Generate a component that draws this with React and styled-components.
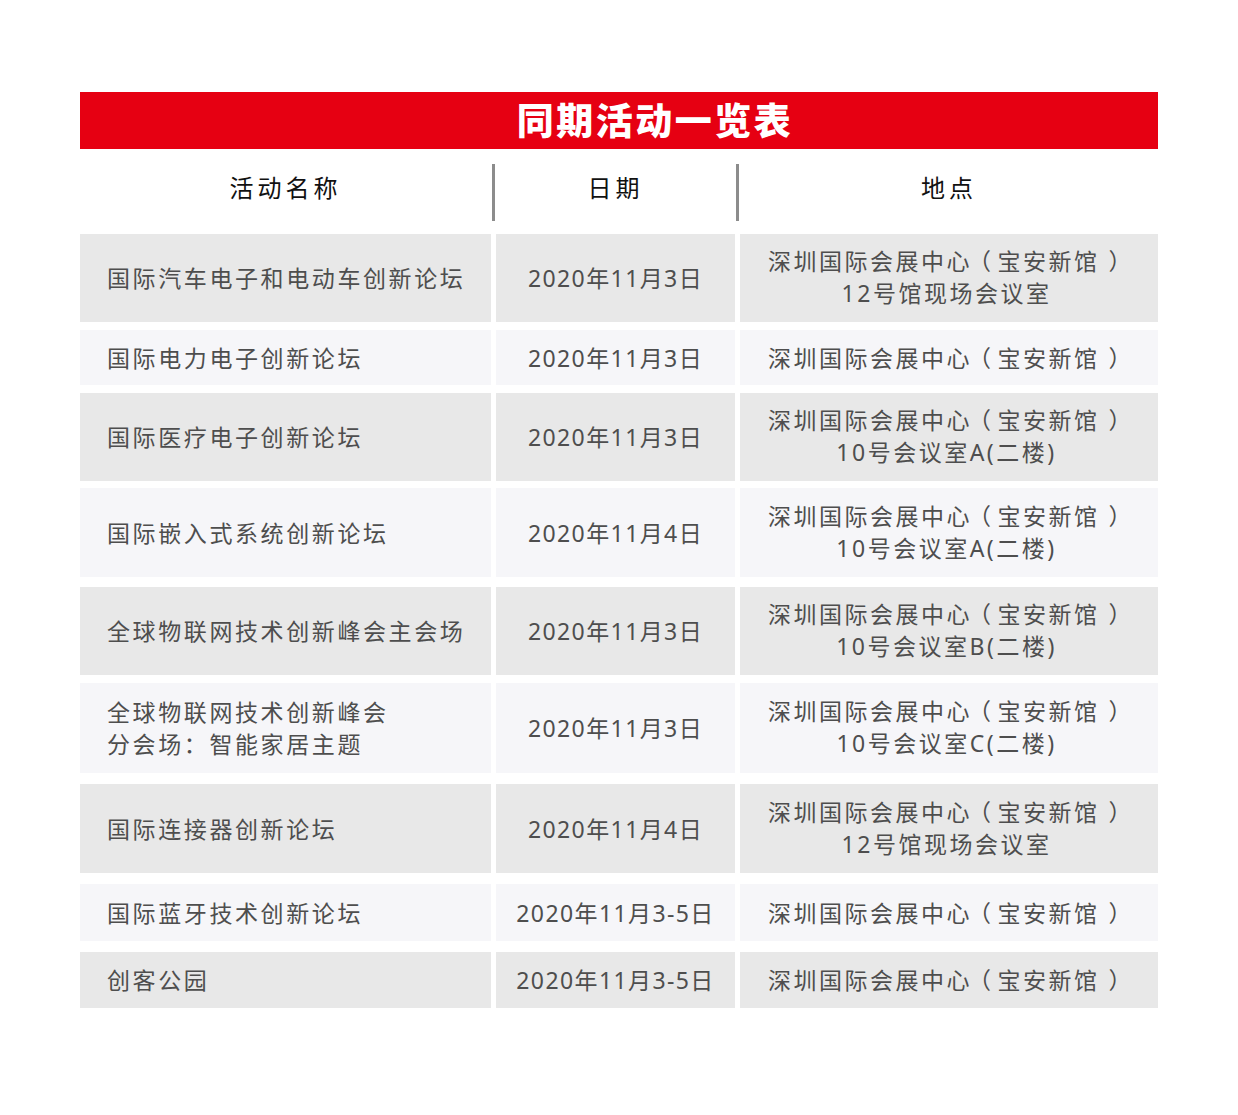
import React from "react";
import styled, { createGlobalStyle } from "styled-components";

const GlobalStyle = createGlobalStyle`
  html, body { margin: 0; padding: 0; background: #ffffff; }
  body { font-family: "Noto Sans", "Noto Sans CJK SC", sans-serif; }
`;

const Page = styled.div`
  width: 1238px;
  min-height: 1115px;
  padding-top: 92px;
  padding-left: 80px;
  box-sizing: border-box;
  display: flex;
  flex-direction: column;
  align-items: flex-start;
`;

const Table = styled.div`
  width: 1078px;
  display: flex;
  flex-direction: column;
`;

const TitleBar = styled.div`
  height: 57px;
  background: #e60012;
  display: flex;
  align-items: center;
  justify-content: center;
  padding-left: 72px;
  padding-bottom: 4px;
  box-sizing: border-box;
  color: #ffffff;
  font-family: "Noto Sans CJK SC", sans-serif;
  font-weight: 900;
  font-size: 37px;
  letter-spacing: 2.5px;
`;

const HeaderRow = styled.div`
  display: grid;
  grid-template-columns: 411px 5px 239px 5px 418px;
  height: 84px;
  padding-top: 15px;
  box-sizing: border-box;
  align-items: start;
`;

const HeaderCell = styled.div`
  height: 57px;
  display: flex;
  align-items: center;
  justify-content: center;
  font-family: "Noto Sans CJK SC", sans-serif;
  font-size: 24px;
  color: #111111;
  letter-spacing: 4px;
  padding-bottom: 12px;
  box-sizing: border-box;
`;

const Divider = styled.div`
  width: 3px;
  height: 57px;
  margin-left: 1px;
  background: #8c8c8c;
`;

const Row = styled.div`
  display: grid;
  grid-template-columns: 411px 239px 418px;
  column-gap: 5px;
  height: ${(p) => p.$h}px;
  margin-top: ${(p) => p.$gap}px;
`;

const Cell = styled.div`
  background: ${(p) => (p.$shade ? "#e8e8e8" : "#f6f6f9")};
  display: flex;
  flex-direction: column;
  justify-content: center;
  align-items: ${(p) => (p.$left ? "flex-start" : "center")};
  text-align: ${(p) => (p.$left ? "left" : "center")};
  padding-left: ${(p) => (p.$left ? "27px" : "0")};
  padding-right: ${(p) => p.$pr || 0}px;
  padding-bottom: ${(p) => p.$pb || 0}px;
  box-sizing: border-box;
  font-family: "Noto Sans", "Noto Sans CJK SC", sans-serif;
  font-size: 23px;
  line-height: 32px;
  color: #4e4e4e;
  letter-spacing: ${(p) => p.$ls}px;
  white-space: nowrap;
`;

const Line = styled.span`
  display: block;
`;

/* full-width bracket set half-width (halt) and padded so the glyph sits centred
   in a full-width slot, as in the picture */
const Bracket = styled.span`
  font-feature-settings: "halt" 1;
  padding-left: ${(p) => (p.$open ? "7.5px" : "9px")};
  padding-right: ${(p) => (p.$open ? "4px" : "2.5px")};
`;

const Location = ({ extra }) => (
  <>
    <Line>
      深圳国际会展中心<Bracket $open>（</Bracket>宝安新馆<Bracket>）</Bracket>
    </Line>
    {extra && <Line>{extra}</Line>}
  </>
);

const rows = [
  { name: ["国际汽车电子和电动车创新论坛"], date: "2020年11月3日", extra: "12号馆现场会议室", h: 88, gap: 1 },
  { name: ["国际电力电子创新论坛"], date: "2020年11月3日", h: 55, gap: 8 },
  { name: ["国际医疗电子创新论坛"], date: "2020年11月3日", extra: "10号会议室A(二楼)", h: 88, gap: 8 },
  { name: ["国际嵌入式系统创新论坛"], date: "2020年11月4日", extra: "10号会议室A(二楼)", h: 89, gap: 7 },
  { name: ["全球物联网技术创新峰会主会场"], date: "2020年11月3日", extra: "10号会议室B(二楼)", h: 88, gap: 10 },
  { name: ["全球物联网技术创新峰会", "分会场：智能家居主题"], date: "2020年11月3日", extra: "10号会议室C(二楼)", h: 90, gap: 8 },
  { name: ["国际连接器创新论坛"], date: "2020年11月4日", extra: "12号馆现场会议室", h: 89, gap: 11 },
  { name: ["国际蓝牙技术创新论坛"], date: "2020年11月3-5日", h: 57, gap: 11 },
  { name: ["创客公园"], date: "2020年11月3-5日", h: 56, gap: 11 },
];

export default function App() {
  return (
    <>
      <GlobalStyle />
      <Page>
        <Table>
          <TitleBar>同期活动一览表</TitleBar>
          <HeaderRow>
            <HeaderCell>活动名称</HeaderCell>
            <Divider />
            <HeaderCell>日期</HeaderCell>
            <Divider />
            <HeaderCell>地点</HeaderCell>
          </HeaderRow>
          {rows.map((r, i) => {
            const shade = i % 2 === 0;
            return (
              <Row key={i} $h={r.h} $gap={r.gap}>
                <Cell $shade={shade} $left $ls={2.6}>
                  {r.name.map((t, j) => (
                    <Line key={j}>{t}</Line>
                  ))}
                </Cell>
                <Cell $shade={shade} $ls={1.4}>
                  {r.date}
                </Cell>
                <Cell $shade={shade} $ls={2.5} $pr={5} $pb={r.extra ? 2 : 0}>
                  <Location extra={r.extra} />
                </Cell>
              </Row>
            );
          })}
        </Table>
      </Page>
    </>
  );
}
